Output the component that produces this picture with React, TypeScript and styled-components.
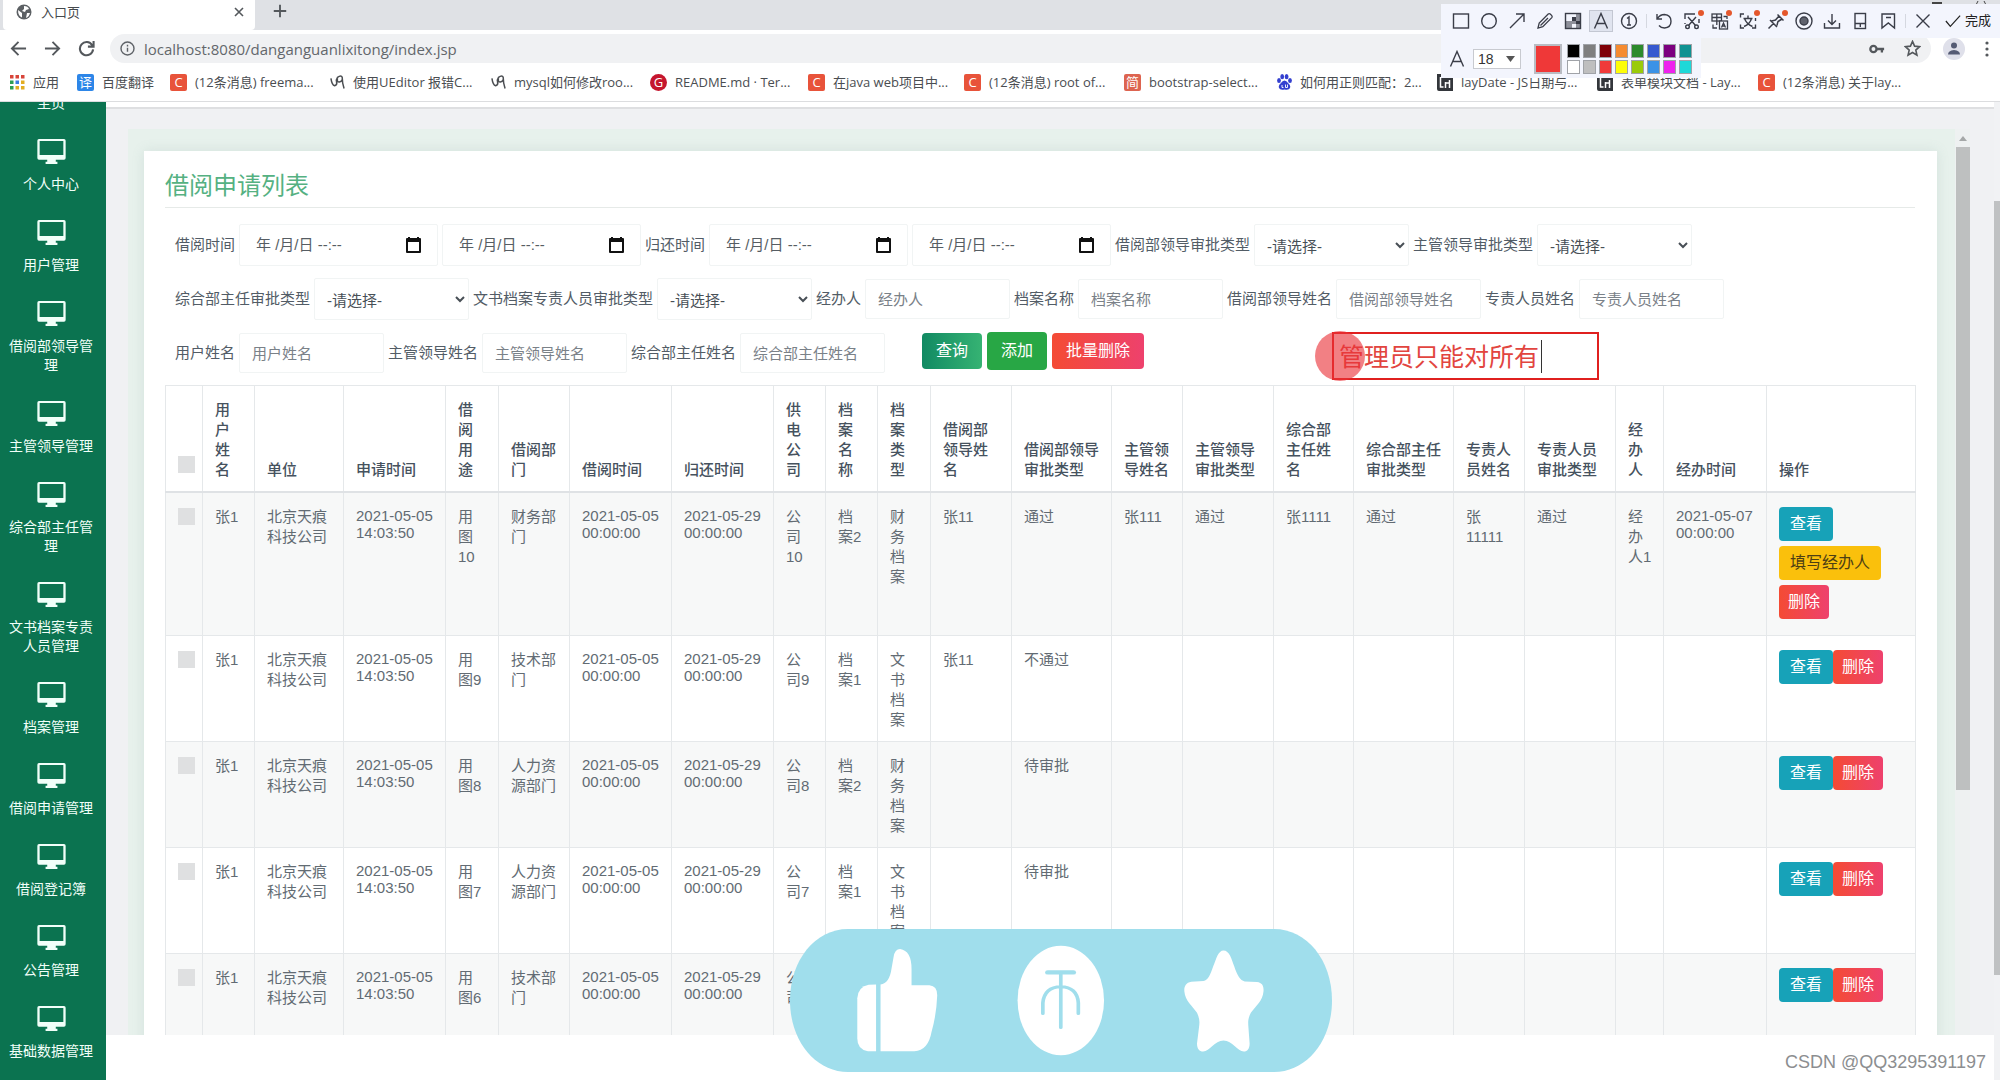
import React from 'react';
import styled, { createGlobalStyle, css } from 'styled-components';

const sans = '"Liberation Sans", "Noto Sans CJK SC", sans-serif';
const chromeFont = '"Open Sans", "Noto Sans CJK SC", sans-serif';

const GlobalStyle = createGlobalStyle`
  *, *::before, *::after { box-sizing: border-box; }
  html, body { margin: 0; }
  body { background: #fff; font-family: ${sans}; overflow: hidden; }
  button, input, select { font: inherit; margin: 0; }
  a { color: inherit; text-decoration: none; }
`;

const Page = styled.div`
  position: relative;
  display: flex;
  flex-direction: column;
  height: 100vh;
  overflow: hidden;
`;

const bareButton = css`
  display: inline-flex;
  align-items: center;
  justify-content: center;
  padding: 0;
  border: 0;
  background: none;
  cursor: pointer;
`;

/* ---------- Browser chrome ---------- */

const TabStrip = styled.div`
  display: flex;
  flex: none;
  height: 30px;
  padding-left: 3px;
  background: #dfe1e5;
`;

const Tab = styled.div`
  display: flex;
  align-items: center;
  gap: 9px;
  width: 252px;
  padding: 0 10px 6px 13px;
  border-radius: 0 0 4px 4px;
  background: #fff;
  color: #45494d;
  font: 13px/24px ${chromeFont};
`;

const TabTitle = styled.span`
  flex: 1;
`;

const ChromeButton = styled.button<{ $w?: number }>`
  ${bareButton}
  width: ${(p) => p.$w ?? 34}px;
  color: #54585c;
`;

const NewTab = styled(ChromeButton)`
  height: 22px;
  margin-left: 8px;
`;

const WindowControls = styled.div`
  display: flex;
  gap: 10px;
  height: 6px;
  margin-left: auto;
  padding-right: 2px;
`;

const NavBar = styled.div`
  display: flex;
  flex: none;
  align-items: center;
  height: 37px;
  padding: 0 3px 0 1px;
  background: #fff;
`;

const Omnibox = styled.div`
  display: flex;
  flex: 1;
  align-items: center;
  gap: 9px;
  height: 29px;
  margin-left: 7px;
  padding: 0 10px;
  border-radius: 15px;
  background: #f0f1f3;
  color: #5f6368;
`;

const UrlInput = styled.input`
  flex: 1;
  padding: 0;
  border: 0;
  outline: 0;
  background: none;
  color: #63676b;
  font: 15px/20px ${chromeFont};
`;

const Bookmarks = styled.nav`
  display: flex;
  flex: none;
  align-items: center;
  height: 35px;
  padding: 0 0 4px 10px;
  border-bottom: 1px solid #dcdddf;
  background: #fff;
  overflow: hidden;
`;

const Bookmark = styled.a<{ $w: number }>`
  display: flex;
  flex: none;
  align-items: center;
  gap: 8px;
  width: ${(p) => p.$w}px;
  color: #4a4d51;
  font: 13px/20px ${chromeFont};
  white-space: nowrap;
`;

const Favicon = styled.span<{ $bg: string; $round?: boolean }>`
  display: flex;
  flex: none;
  align-items: center;
  justify-content: center;
  width: 17px;
  height: 17px;
  border-radius: ${(p) => (p.$round ? '50%' : '2px')};
  background: ${(p) => p.$bg};
  color: #fff;
  font-size: 13px;
  line-height: 17px;
`;

/* ---------- Application shell ---------- */

const Shell = styled.div`
  display: flex;
  flex: 1;
  min-height: 0;
`;

const Sidebar = styled.nav`
  display: flex;
  flex: none;
  flex-direction: column;
  justify-content: flex-end;
  width: 106px;
  padding: 0 12px 6px 8px;
  background: #0b7350;
  overflow: hidden;
`;

const SideItem = styled.a`
  display: flex;
  flex: none;
  flex-direction: column;
  align-items: center;
  gap: 11px;
  padding: 13px 0;
  color: #f1fff9;
  font-size: 14px;
  line-height: 19px;
  text-align: center;
`;

const Main = styled.main`
  display: flex;
  flex: 1;
  flex-direction: column;
  min-width: 0;
  padding-top: 5px;
`;

const Canvas = styled.div`
  display: flex;
  flex: 1;
  min-height: 0;
  padding: 20px 24px 0 22px;
  border-top: 2px solid #dedfe1;
  background: #f0f1f3;
`;

const Footer = styled.footer`
  display: flex;
  flex: none;
  align-items: center;
  justify-content: flex-end;
  height: 45px;
  padding: 8px 8px 0 0;
  background: #fff;
  color: #8c8e90;
  font-size: 18px;
  line-height: 24px;
`;

const Frame = styled.div`
  display: flex;
  flex: 1;
  min-width: 0;
  background: #eef1f1;
`;

const FrameBody = styled.div`
  flex: 1;
  min-width: 0;
  padding: 22px 18px 0 16px;
  background: #e7f1ec;
  overflow: hidden;
`;

const InnerScroll = styled.div`
  display: flex;
  flex: none;
  flex-direction: column;
  align-items: center;
  width: 15px;
`;

const ScrollUp = styled.span`
  display: flex;
  flex: none;
  height: 18px;
  padding-top: 7px;
`;

const ScrollThumb = styled.span<{ $h: number }>`
  width: 14px;
  height: ${(p) => p.$h}%;
  background: #bec0c0;
`;

const OuterScroll = styled.div`
  flex: none;
  width: 6px;
  padding-top: 99px;
  background: #f1f2f4;
`;

const OuterThumb = styled.div`
  height: 88%;
  background: #bfc1c2;
`;

const Card = styled.section`
  min-height: 100%;
  padding: 20px 22px 0 21px;
  background: #fff;
  box-shadow: 0 0 12px rgba(110, 150, 140, 0.16);
`;

const Title = styled.h1`
  margin: 0;
  padding-bottom: 6px;
  border-bottom: 1px solid #e6eae8;
  color: #55b182;
  font-size: 24px;
  font-weight: 400;
  line-height: 30px;
`;

/* ---------- Search form ---------- */

const SearchForm = styled.form`
  display: flex;
  flex-wrap: wrap;
  gap: 12px 4px;
  margin: 16px 0 11px;
  padding-left: 10px;
  color: #525c66;
  font-size: 15px;
  line-height: 20px;
`;

const Group = styled.div`
  display: flex;
  align-items: center;
  gap: 4px;
  min-height: 42px;
`;

const boxed = css`
  border: 1px solid #f1f4f4;
  border-radius: 2px;
  background: #fff;
  outline: 0;
`;

const DateBox = styled.div`
  ${boxed}
  display: flex;
  align-items: center;
  width: 199px;
  height: 42px;
  padding: 0 16px;
`;

const DateInput = styled.input`
  flex: 1;
  min-width: 0;
  padding: 0;
  border: 0;
  outline: 0;
  background: none;
  &::placeholder { color: #565d63; opacity: 1; }
`;

const IconButton = styled.button`
  ${bareButton}
`;

const Select = styled.select`
  ${boxed}
  width: 155px;
  height: 42px;
  padding: 2px 4px 0 8px;
  color: #484f56;
`;

const TextInput = styled.input`
  ${boxed}
  width: 145px;
  height: 40px;
  padding: 0 12px;
  &::placeholder { color: #7a8188; opacity: 1; }
`;

const Actions = styled.div`
  display: flex;
  align-items: center;
  align-self: flex-start;
  gap: 5px;
  margin-left: 33px;
`;

type Tone = 'query' | 'add' | 'danger' | 'info' | 'warn';
const tones: Record<Tone, string> = {
  query: 'linear-gradient(90deg, #118a63, #36b373)',
  add: '#28a745',
  danger: 'linear-gradient(90deg, #f44b34, #ee416d)',
  info: '#17a2b8',
  warn: '#fac00c',
};

const Btn = styled.button<{ $tone: Tone; $small?: boolean }>`
  height: ${(p) => (p.$small ? 34 : p.$tone === 'add' ? 38 : 36)}px;
  padding: 0 ${(p) => (p.$small ? (p.$tone === 'danger' ? 9 : 11) : 14)}px;
  border: 0;
  border-radius: 4px;
  background: ${(p) => tones[p.$tone]};
  color: ${(p) => (p.$tone === 'warn' ? '#4d3f14' : '#fff')};
  font-size: 16px;
  line-height: 20px;
  cursor: pointer;
`;

/* ---------- Table ---------- */

const Table = styled.table`
  width: 100%;
  border-collapse: collapse;
  table-layout: fixed;
  color: #626b73;
  font-size: 15px;
  line-height: 20px;

  th, td {
    padding: 14px 11px 11px 12px;
    border: 1px solid #e5e8ea;
    text-align: left;
  }
  th {
    border-bottom: 2px solid #dfe2e5;
    color: #46525e;
    font-weight: 500;
    vertical-align: bottom;
  }
  td { vertical-align: top; }
  tbody tr:nth-child(odd) { background: #f7f8f8; }
`;

const DateCell = styled.td`
  line-height: 17px;
`;

const Check = styled.input`
  display: block;
  width: 17px;
  height: 17px;
  margin: 1px 0 7px;
  appearance: none;
  background: #dfe0e1;
  &:checked { background: #28a745; }
`;

const RowActions = styled.div`
  display: flex;
  flex-wrap: wrap;
  gap: 5px 0;
  padding-bottom: 5px;
`;

/* ---------- Overlays ---------- */

const Note = styled.div`
  position: absolute;
  top: 332px;
  left: 1332px;
  display: flex;
  align-items: center;
  width: 267px;
  height: 48px;
  padding-left: 5px;
  border: 2px solid #e0201f;
`;

const NoteInput = styled.input`
  width: 202px;
  padding: 2px 0 0;
  border: 0;
  outline: 0;
  background: none;
  color: #e2453f;
  font-size: 25px;
  line-height: 32px;
`;

const Caret = styled.span`
  width: 1px;
  height: 33px;
  background: #333;
`;

const Pointer = styled.span`
  position: absolute;
  top: -3px;
  left: -19px;
  width: 50px;
  height: 50px;
  border-radius: 50%;
  background: rgba(234, 50, 56, 0.62);
`;

const Reactions = styled.div`
  position: absolute;
  bottom: 8px;
  left: calc(50% + 61px);
  transform: translateX(-50%);
  height: 143px;
`;

const Capture = styled.div`
  position: absolute;
  top: 4px;
  right: 0;
  width: 559px;
  color: #3a3d48;
`;

const CaptureTools = styled.div`
  display: flex;
  align-items: center;
  height: 34px;
  padding: 0 9px 0 6px;
  background: #f3f5fd;
`;

const Tool = styled.button<{ $on?: boolean }>`
  ${bareButton}
  position: relative;
  flex: none;
  width: ${(p) => (p.$on ? 24 : 28)}px;
  height: 22px;
  margin: 0 ${(p) => (p.$on ? 2 : 0)}px;
  color: inherit;
  ${(p) => p.$on && 'background: #e0e4ef; box-shadow: inset 0 0 0 1px #c3c7d2;'}
`;

const Dot = styled.span`
  position: absolute;
  top: 0;
  right: 2px;
  width: 6px;
  height: 6px;
  border-radius: 50%;
  background: #e4572c;
`;

const Divider = styled.span`
  flex: none;
  width: 1px;
  height: 14px;
  margin: 0 3px;
  background: #d5d8e0;
`;

const Done = styled.button`
  ${bareButton}
  gap: 4px;
  flex: 1;
  justify-content: flex-end;
  color: #222;
  font-size: 13px;
  line-height: 20px;
`;

const CaptureOptions = styled.div`
  display: flex;
  align-items: center;
  width: 260px;
  height: 40px;
  padding: 2px 2px 0 7px;
  background: #f3f5fd;
`;

const SizeSelect = styled.div`
  display: flex;
  align-items: center;
  width: 48px;
  height: 20px;
  margin: 0 13px 0 7px;
  padding: 0 5px 0 4px;
  border: 1px solid #c8cad0;
  background: #fff;
`;

const SizeField = styled.select`
  flex: 1;
  padding: 0;
  border: 0;
  outline: 0;
  appearance: none;
  background: none;
  color: #333;
  font-size: 14px;
  line-height: 18px;
`;

const Current = styled.span`
  width: 28px;
  height: 30px;
  margin-right: 5px;
  border: 2px solid #b9bcc3;
  background: #ef3838;
`;

const Palette = styled.div`
  display: grid;
  grid-template-columns: repeat(8, 13px);
  gap: 2px 3px;
`;

const Swatch = styled.button<{ $c: string }>`
  height: 14px;
  padding: 0;
  border: 1px solid #a0a3a8;
  background: ${(p) => p.$c};
`;

/* ---------- Icons ---------- */

const Line = ({ size = 18, w = 1.4, children }: { size?: number; w?: number; children: React.ReactNode }) => (
  <svg width={size} height={size} viewBox="0 0 18 18" fill="none" stroke="currentColor" strokeWidth={w}>
    {children}
  </svg>
);

const Desktop = () => (
  <svg width="29" height="25" viewBox="0 0 86 76" fill="currentColor">
    <path fillRule="evenodd" d="M5 0h76q5 0 5 5v53q0 5-5 5H56v6h5v7H25v-7h5v-6H5q-5 0-5-5V5q0-5 5-5zM7 6v43h72V6z" />
  </svg>
);

const Calendar = () => (
  <svg width="15" height="16" viewBox="0 0 15 16" fill="#111">
    <path fillRule="evenodd" d="M2 1V0h2v1h7V0h2v1h1q1 0 1 1v13q0 1-1 1H1q-1 0-1-1V2q0-1 1-1zM2 5v9h11V5z" />
  </svg>
);

const Vine = () => (
  <svg width="15" height="17" viewBox="0 0 16 17" fill="none" stroke="#4b4e52" strokeWidth="1.6">
    <path d="M1 4q1 7 4 8 3-1 2-4-1-2 1-5 4-3 5 0 1 4-3 5-3 0-2-4M13 3q0 6 2 12" />
  </svg>
);

const Paw = () => (
  <svg width="15" height="16" viewBox="0 0 15 16" fill="#3440cf">
    <ellipse cx="2" cy="6.500" rx="1.900" ry="2.500" />
    <ellipse cx="5.200" cy="2.700" rx="1.900" ry="2.600" />
    <ellipse cx="9.600" cy="2.700" rx="1.900" ry="2.600" />
    <ellipse cx="13" cy="6.500" rx="1.900" ry="2.500" />
    <path d="M7.500 6.500q2 0 3.500 2.500 3 2 2 5-1 2.500-5.500 1.500Q3 16.500 2 14q-1-3 2-5 1.500-2.500 3.500-2.500z" />
    <path d="M5 11v2.500h1.500M8.500 10.500v3h2v-3" stroke="#fff" fill="none" strokeWidth=".9" />
  </svg>
);

const LayMark = () => (
  <svg width="16" height="17" viewBox="0 0 16 17">
    <path d="M0 0h4l2 2h10v15H2q-2 0-2-2z" fill="#33363b" />
    <path d="M3.500 3v10h3M8.500 8v6M8.500 9h4v5M12.500 6v8" fill="none" stroke="#fff" strokeWidth="1.500" />
  </svg>
);

const AppsGrid = () => (
  <svg width="15" height="15" viewBox="0 0 15 15">
    {['#d8453a', '#d8453a', '#d8453a', '#2f9e53', '#3b7de0', '#e2ad22', '#2f9e53', '#e2ad22', '#e2ad22'].map((c, i) => (
      <rect key={i} x={(i % 3) * 5.5} y={Math.floor(i / 3) * 5.5} width="3.500" height="3.500" fill={c} />
    ))}
  </svg>
);

const LetterA = ({ size = 18 }: { size?: number }) => (
  <Line size={size}><path d="M2.500 16.500L9 1.500l6.500 15M5 11.500h8" /></Line>
);

/* ---------- Data ---------- */

type Mark = { text: string; w: number; icon: React.ReactNode };
const csdn = <Favicon $bg="#e8533a">C</Favicon>;
const marks: Mark[] = [
  { text: '应用', w: 67, icon: <AppsGrid /> },
  { text: '百度翻译', w: 93, icon: <Favicon $bg="#2d86e8">译</Favicon> },
  { text: '(12条消息) freema...', w: 160, icon: csdn },
  { text: '使用UEditor 报错C...', w: 161, icon: <Vine /> },
  { text: 'mysql如何修改roo...', w: 159, icon: <Vine /> },
  { text: 'README.md · Ter...', w: 158, icon: <Favicon $bg="#c5162e" $round>G</Favicon> },
  { text: '在java web项目中...', w: 156, icon: csdn },
  { text: '(12条消息) root of...', w: 160, icon: csdn },
  { text: 'bootstrap-select...', w: 153, icon: <Favicon $bg="#dd6450">简</Favicon> },
  { text: '如何用正则匹配：2...', w: 160, icon: <Paw /> },
  { text: 'layDate - JS日期与...', w: 160, icon: <LayMark /> },
  { text: '表单模块文档 - Lay...', w: 161, icon: <LayMark /> },
  { text: '(12条消息) 关于lay...', w: 160, icon: csdn },
];

const menu = [
  '主页', '个人中心', '用户管理', '借阅部领导管理', '主管领导管理', '综合部主任管理',
  '文书档案专责人员管理', '档案管理', '借阅申请管理', '借阅登记簿', '公告管理', '基础数据管理',
];

const columns: [string, number][] = [
  ['用户姓名', 52], ['单位', 89], ['申请时间', 102], ['借阅用途', 53], ['借阅部门', 71],
  ['借阅时间', 102], ['归还时间', 102], ['供电公司', 52], ['档案名称', 52], ['档案类型', 53],
  ['借阅部领导姓名', 81], ['借阅部领导审批类型', 100], ['主管领导姓名', 71], ['主管领导审批类型', 91],
  ['综合部主任姓名', 80], ['综合部主任审批类型', 100], ['专责人员姓名', 71], ['专责人员审批类型', 91],
  ['经办人', 48], ['经办时间', 103], ['操作', 149],
];

const applied = '2021-05-05 14:03:50';
const from = '2021-05-05 00:00:00';
const to = '2021-05-29 00:00:00';
const base = (n: number, dept: string, arch: string, kind: string, rest: string[]) => [
  '张1', '北京天痕科技公司', applied, `用图${n}`, dept, from, to, `公司${n}`, arch, kind,
  ...rest, ...Array(10 - rest.length).fill(''),
];
const rows: string[][] = [
  base(10, '财务部门', '档案2', '财务档案', ['张11', '通过', '张111', '通过', '张1111', '通过', '张11111', '通过', '经办人1', '2021-05-07 00:00:00']),
  base(9, '技术部门', '档案1', '文书档案', ['张11', '不通过']),
  base(8, '人力资源部门', '档案2', '财务档案', ['', '待审批']),
  base(7, '人力资源部门', '档案1', '文书档案', ['', '待审批']),
  base(6, '技术部门', '档案2', '财务档案', ['', '待审批']),
];

const palette = [
  '#000', '#7f7f7f', '#7f0008', '#f58b30', '#2c8a2c', '#3659cf', '#7c007f', '#109292',
  '#fff', '#bfbfbf', '#f03a3a', '#fdfd08', '#9acb0a', '#3a92e6', '#ee22ee', '#1ed8d8',
];

const tools: { name: string; icon: React.ReactNode; on?: boolean; dot?: boolean; split?: boolean }[] = [
  { name: '矩形', icon: <Line><rect x="1.500" y="2" width="15" height="14" /></Line> },
  { name: '椭圆', icon: <Line><circle cx="9" cy="9" r="7.300" /></Line> },
  { name: '箭头', icon: <Line><path d="M2 16L16 2M8 2h8v8" /></Line> },
  { name: '画笔', icon: <Line w={1.3}><path d="M2 16l1.200-5 9-9q1-.8 2 0l1.600 1.600q.8 1 0 2l-9 9zM4.500 13.500l7.500-7.500" /></Line> },
  { name: '马赛克', icon: <Line><rect x="1.500" y="1.500" width="15" height="15" /><path fill="currentColor" stroke="none" d="M8 5h4v4H8zM12 9h4v3h-4z" /><path fill="currentColor" fillOpacity=".55" stroke="none" d="M12 2h4v7h-4zM2 9h6v7H2zM8 9h4v3H8zM12 12h4v4h-4z" /></Line> },
  { name: '文字', icon: <LetterA />, on: true },
  { name: '序号', icon: <Line><circle cx="9" cy="9" r="7.500" /><path d="M7 6.500L9 5v8M7 13h4" /></Line> },
  { name: '撤销', split: true, icon: <Line><path d="M2 2v5h5M2.500 6.500Q5 2.500 9.500 2.500q6.500.5 6.500 6.700T9.500 16q-3.500 0-5.500-2.500" /></Line> },
  { name: '截图', dot: true, icon: <Line><path d="M2 7V2h10M16 7v4M5 5l7.500 8.500M13 5l-7.500 8.500M2 11v1M16 2v0" /><circle cx="4.500" cy="14.800" r="1.800" /><circle cx="13.500" cy="14.800" r="1.800" /></Line> },
  { name: '翻译', dot: true, icon: <Line w={1.3}><rect x="1" y="2" width="9.500" height="7" /><path d="M5.800 2v11M1 5.500h9.500M12.500 4.500H16V7M2 12.500V16h4" /><rect x="8.500" y="9" width="8" height="8" fill="#f3f5fd" /><path d="M10.500 15.500l2-4.500 2 4.500M11 14h3" /></Line> },
  { name: '文字识别', dot: true, icon: <Line><path d="M1.500 5.500V2H5M1.500 12.500V16H5M13 16h3.500v-3.500M16.500 6v3M9 3.500v2.500M4.500 6.500h9M12.500 6.500q-1.500 5.500-7.500 8M5.500 6.500q2 5.500 8 8" /></Line> },
  { name: '钉住', dot: true, icon: <Line w={1.5}><path d="M1.500 16.500L6.500 11.500M3 8l7 7M4.500 9q2.500-.5 4-1L12 4M10 13.500q.5-2.500 1-4L15 7M10.500 2.500l6 6" /></Line> },
  { name: '录屏', icon: <Line><circle cx="9" cy="9" r="8" /><circle cx="9" cy="9" r="4" fill="currentColor" fillOpacity=".8" /></Line> },
  { name: '保存', icon: <Line><path d="M1.500 11v5h15v-5M9 2v10M5 8.500l4 4 4-4" /></Line> },
  { name: '手机', icon: <Line><rect x="4" y="1.500" width="10.500" height="15" /><path d="M4 11.500h10.500M9.300 12v3" /></Line> },
  { name: '收藏', icon: <Line><path d="M3 2h12.500v14L9.300 11 3 16zM7 5.500h5" /></Line> },
  { name: '关闭', split: true, icon: <Line><path d="M2.500 2.500l13 13M15.500 2.500l-13 13" /></Line> },
];

/* ---------- Parts ---------- */

const DateField = ({ id, label }: { id: string; label: string }) => (
  <DateBox>
    <DateInput id={id} aria-label={label} placeholder="年 /月/日 --:--" />
    <IconButton type="button" aria-label="选择日期"><Calendar /></IconButton>
  </DateBox>
);

const DateRange = ({ id, label }: { id: string; label: string }) => (
  <>
    <Group><label htmlFor={id}>{label}</label><DateField id={id} label={label} /></Group>
    <Group><DateField id={`${id}-end`} label={`${label}止`} /></Group>
  </>
);

const Choice = ({ id, label }: { id: string; label: string }) => (
  <Group>
    <label htmlFor={id}>{label}</label>
    <Select id={id}><option>-请选择-</option><option>通过</option><option>不通过</option><option>待审批</option></Select>
  </Group>
);

const Field = ({ id, label }: { id: string; label: string }) => (
  <Group><label htmlFor={id}>{label}</label><TextInput id={id} placeholder={label} /></Group>
);

const ReactionBar = () => (
  <svg width="542" height="143" viewBox="73 267 1329 428" preserveAspectRatio="none" role="img" aria-label="点赞 投币 收藏">
    <path fill="#a0deec" d="M215 267H1260C1340 267 1402 360 1402 481S1340 695 1260 695H215C135 695 73 602 73 481S135 267 215 267z" />
    <g fill="#fff">
      <path d="M284 433v200h-20q-26-5-26-38V474q2-34 28-40z" />
      <path d="M295 433q22-4 27-48l5-34q3-24 16-24 28 5 28 60v48h44q19 2 19 30-2 60-14 110-8 55-42 58h-83z" />
      <ellipse cx="737" cy="481" rx="106" ry="164" />
      <path d="M1136 331c14 0 20 25 26 47 7 26 15 44 26 46l30 2c14 2 17 14 16 28-2 28-18 42-31 64-7 17-7 25-6 42l3 50c0 16-6 24-14 24-16 0-28-33-50-33s-34 33-50 33c-9 0-15-8-15-24l5-50c2-17 1-26-5-42-12-22-29-36-31-64-1-14 3-26 17-29l30-2c11-3 17-19 24-45 7-22 12-47 25-47z" />
    </g>
    <g fill="none" stroke="#a0deec" strokeLinecap="round">
      <path strokeWidth="13" d="M705 397h63" />
      <path strokeWidth="9" d="M737 400v162M693 520v-32q4-47 44-48 40 1 43 48v32" />
    </g>
  </svg>
);

export default function App() {
  return (
    <Page>
      <GlobalStyle />
      <TabStrip>
        <Tab>
          <svg width="16" height="16" viewBox="0 0 16 16">
            <circle cx="8" cy="8" r="7.500" fill="#5c6064" />
            <path fill="#fff" d="M2 6l4 3v4.500Q2 12 2 6zM8 2q4 0 5 3l-3 1-1 2-3-1 2-2zM11 9l3 0q-1 4-4 5z" />
          </svg>
          <TabTitle>入口页</TabTitle>
          <ChromeButton $w={12} aria-label="关闭标签页"><Line size={12} w={2.400}><path d="M3 3l12 12M15 3L3 15" /></Line></ChromeButton>
        </Tab>
        <NewTab aria-label="新标签页"><Line size={14} w={2.400}><path d="M9 1v16M1 9h16" /></Line></NewTab>
        <WindowControls>
          <ChromeButton aria-label="最小化"><svg width="10" height="2" viewBox="0 0 10 2"><path d="M0 1h10" stroke="#444" strokeWidth="2" /></svg></ChromeButton>
          <ChromeButton aria-label="关闭窗口"><svg width="10" height="4" viewBox="0 0 10 4"><path d="M2 0L0 4M8 0l2 4" stroke="#444" /></svg></ChromeButton>
        </WindowControls>
      </TabStrip>

      <NavBar>
        <ChromeButton aria-label="后退"><Line size={17} w={2}><path d="M17 9H2M9 2L2 9l7 7" /></Line></ChromeButton>
        <ChromeButton aria-label="前进"><Line size={17} w={2}><path d="M1 9h15M9 2l7 7-7 7" /></Line></ChromeButton>
        <ChromeButton aria-label="刷新"><Line size={17} w={2.200}><path d="M15 5.500A7 7 0 1 0 16 10M16.500 1v6h-6" /></Line></ChromeButton>
        <Omnibox>
          <Line size={15} w={1.700}><circle cx="9" cy="9" r="7.800" /><path d="M9 8v5M9 4.500v2" /></Line>
          <UrlInput aria-label="地址" defaultValue="localhost:8080/danganguanlixitong/index.jsp" />
          <ChromeButton aria-label="密码">
            <Line size={16} w={2.600}><circle cx="5" cy="9" r="3.500" /><path d="M9 9h8M14.500 9v4" /></Line>
          </ChromeButton>
          <ChromeButton $w={18} aria-label="加入书签">
            <Line size={17} w={1.700}><path d="M9 1.500l2.200 5 5.300.5-4 3.700 1.200 5.300L9 13.200 4.300 16l1.200-5.300-4-3.700 5.300-.5z" /></Line>
          </ChromeButton>
        </Omnibox>
        <ChromeButton $w={46} aria-label="用户">
          <svg width="22" height="22" viewBox="0 0 22 22">
            <circle cx="11" cy="11" r="11" fill="#dfe0ea" />
            <circle cx="11" cy="7.500" r="3" fill="#555b74" />
            <path d="M5 16.500q0-4 6-4.500 6 .5 6 4.500z" fill="#555b74" />
          </svg>
        </ChromeButton>
        <ChromeButton $w={20} aria-label="菜单">
          <svg width="4" height="16" viewBox="0 0 4 16" fill="currentColor"><circle cx="2" cy="2" r="1.600" /><circle cx="2" cy="8" r="1.600" /><circle cx="2" cy="14" r="1.600" /></svg>
        </ChromeButton>
      </NavBar>

      <Bookmarks>
        {marks.map((m) => (
          <Bookmark key={m.text} href="#" $w={m.w}>{m.icon}{m.text}</Bookmark>
        ))}
      </Bookmarks>

      <Shell>
        <Sidebar>
          {menu.map((m) => (
            <SideItem key={m} href="#"><Desktop />{m}</SideItem>
          ))}
        </Sidebar>
        <Main>
          <Canvas>
            <Frame>
              <FrameBody>
                <Card>
                  <Title>借阅申请列表</Title>
                  <SearchForm onSubmit={(e) => e.preventDefault()}>
                    <DateRange id="borrow" label="借阅时间" />
                    <DateRange id="return" label="归还时间" />
                    <Choice id="dept-type" label="借阅部领导审批类型" />
                    <Choice id="lead-type" label="主管领导审批类型" />
                    <Choice id="director-type" label="综合部主任审批类型" />
                    <Choice id="clerk-type" label="文书档案专责人员审批类型" />
                    <Field id="handler" label="经办人" />
                    <Field id="archive" label="档案名称" />
                    <Field id="dept-name" label="借阅部领导姓名" />
                    <Field id="clerk-name" label="专责人员姓名" />
                    <Field id="user-name" label="用户姓名" />
                    <Field id="lead-name" label="主管领导姓名" />
                    <Field id="director-name" label="综合部主任姓名" />
                    <Actions>
                      <Btn $tone="query">查询</Btn>
                      <Btn $tone="add" type="button">添加</Btn>
                      <Btn $tone="danger" type="button">批量删除</Btn>
                    </Actions>
                  </SearchForm>
                  <Table>
                    <colgroup>
                      <col width={37} />
                      {columns.map(([name, w]) => <col key={name} width={w} />)}
                    </colgroup>
                    <thead>
                      <tr>
                        <th><Check type="checkbox" aria-label="全选" /></th>
                        {columns.map(([name]) => <th key={name}>{name}</th>)}
                      </tr>
                    </thead>
                    <tbody>
                      {rows.map((r, i) => (
                        <tr key={i}>
                          <td><Check type="checkbox" aria-label={`选择${r[3]}`} /></td>
                          {r.map((c, j) => (/^2021/.test(c) ? <DateCell key={j}>{c}</DateCell> : <td key={j}>{c}</td>))}
                          <td>
                            <RowActions>
                              <Btn $small $tone="info">查看</Btn>
                              {i === 0 && <Btn $small $tone="warn">填写经办人</Btn>}
                              <Btn $small $tone="danger">删除</Btn>
                            </RowActions>
                          </td>
                        </tr>
                      ))}
                    </tbody>
                  </Table>
                </Card>
              </FrameBody>
              <InnerScroll>
                <ScrollUp><svg width="8" height="5" viewBox="0 0 8 5"><path d="M0 5l4-5 4 5z" fill="#a5a8a8" /></svg></ScrollUp>
                <ScrollThumb $h={71} />
              </InnerScroll>
            </Frame>
          </Canvas>
          <Footer>CSDN @QQ3295391197</Footer>
        </Main>
        <OuterScroll><OuterThumb /></OuterScroll>
      </Shell>

      <Note>
        <NoteInput aria-label="标注文字" defaultValue="管理员只能对所有" />
        <Caret />
        <Pointer />
      </Note>

      <Reactions><ReactionBar /></Reactions>

      <Capture>
        <CaptureTools>
          {tools.map((t) => (
            <React.Fragment key={t.name}>
              {t.split && <Divider />}
              <Tool $on={t.on} aria-label={t.name}>{t.icon}{t.dot && <Dot />}</Tool>
            </React.Fragment>
          ))}
          <Done><Line size={16}><path d="M1 9l5 6L17 3" /></Line>完成</Done>
        </CaptureTools>
        <CaptureOptions>
          <LetterA />
          <SizeSelect>
            <SizeField aria-label="字号" defaultValue="18"><option>18</option><option>24</option></SizeField>
            <svg width="9" height="6" viewBox="0 0 9 6"><path d="M0 0h9L4.500 6z" fill="#555" /></svg>
          </SizeSelect>
          <Current />
          <Palette>
            {palette.map((c) => <Swatch key={c} $c={c} aria-label={`颜色 ${c}`} />)}
          </Palette>
        </CaptureOptions>
      </Capture>
    </Page>
  );
}
